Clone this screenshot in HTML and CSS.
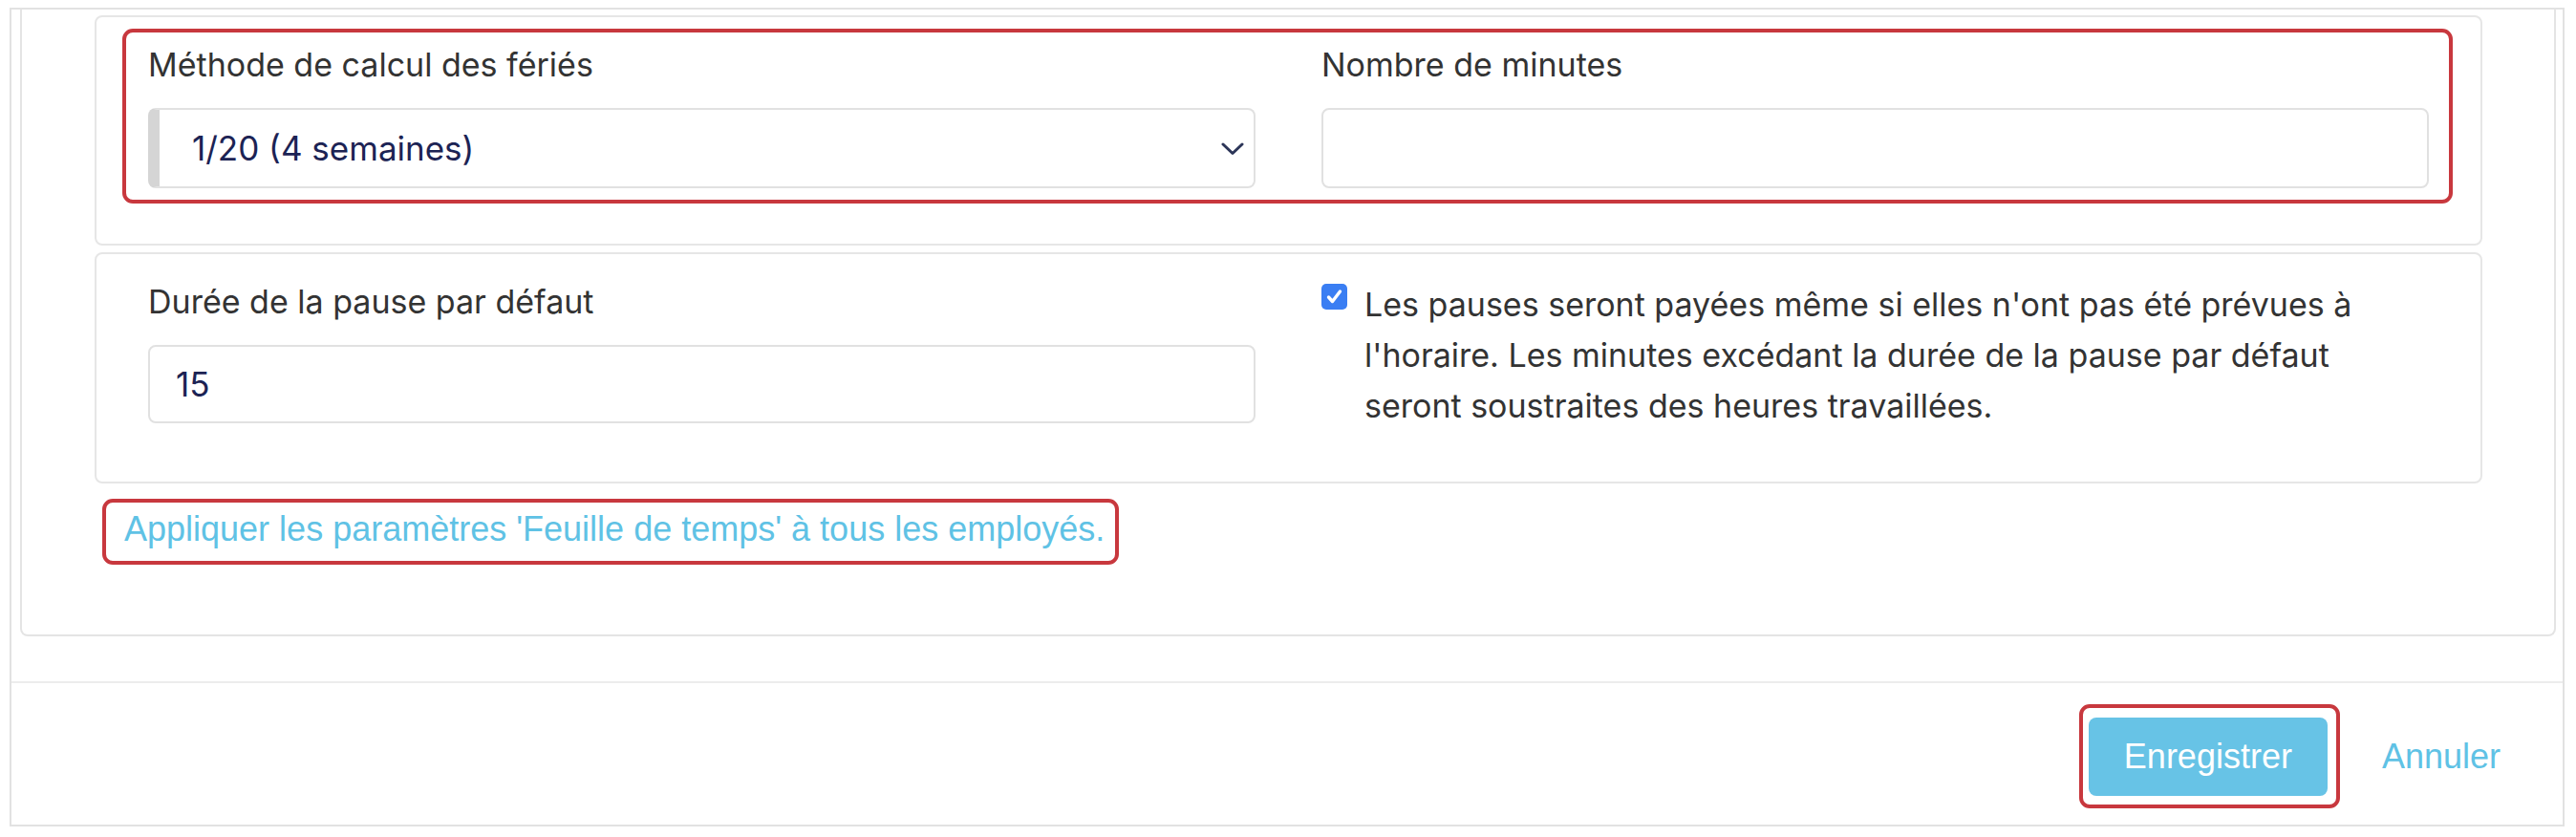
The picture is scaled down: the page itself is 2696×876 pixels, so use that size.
FILE: index.html
```html
<!DOCTYPE html>
<html lang="fr">
<head>
<meta charset="utf-8">
<title>Feuille de temps</title>
<link rel="stylesheet" href="styles.css">
</head>
<body>
<div class="frame">
  <div class="frame-body">
    <div class="panel">
      <section class="card card--first">
        <div class="row highlight highlight--row">
          <div class="field">
            <label class="label">Méthode de calcul des fériés</label>
            <div class="select">
              <span class="value">1/20 (4 semaines)</span>
              <svg class="chevron" width="24" height="14" viewBox="0 0 24 14"><path d="M2 2 L12 11.5 L22 2" fill="none" stroke="#2c3558" stroke-width="3" stroke-linecap="round" stroke-linejoin="round"/></svg>
            </div>
          </div>
          <div class="field">
            <label class="label">Nombre de minutes</label>
            <div class="input"></div>
          </div>
        </div>
      </section>
      <section class="card card--second">
        <div class="row">
          <div class="field">
            <label class="label">Durée de la pause par défaut</label>
            <div class="input input--short"><span class="value">15</span></div>
          </div>
          <div class="check-field">
            <span class="checkbox">
              <svg width="27" height="27" viewBox="0 0 27 27"><path d="M7.5 14 L11.5 18.5 L19.5 8" fill="none" stroke="#fff" stroke-width="3.4" stroke-linecap="round" stroke-linejoin="round"/></svg>
            </span>
            <p class="check-text">Les pauses seront payées même si elles n'ont pas été prévues à l'horaire. Les minutes excédant la durée de la pause par défaut seront soustraites des heures travaillées.</p>
          </div>
        </div>
      </section>
      <div class="apply">
        <a class="apply-link highlight highlight--link" href="#">Appliquer les paramètres 'Feuille de temps' à tous les employés.</a>
      </div>
    </div>
  </div>
  <footer class="footer">
    <button class="btn-save highlight highlight--btn" type="button">Enregistrer</button>
    <a class="btn-cancel" href="#">Annuler</a>
  </footer>
</div>
</body>
</html>
```
FILE: styles.css
```css
* { box-sizing: border-box; }

html, body {
  margin: 0;
  padding: 0;
  background: #fff;
}

body {
  font-family: Inter, "Noto Sans", sans-serif;
  color: #333;
}

.frame {
  margin: 8px 12px 0 10px;
  border: 2px solid #e2e2e2;
}

.frame-body {
  padding: 0 7px 47px 9px;
}

.panel {
  border: 2px solid #e4e4e4;
  border-top: 0;
  border-radius: 0 0 8px 8px;
  padding: 6px 75px 90px 76px;
}

.card {
  border: 2px solid #e6e6e6;
  border-radius: 8px;
  padding: 26px 54px 58px 54px;
}

.card--second {
  margin-top: 7px;
  padding-bottom: 53px;
}

.row {
  display: grid;
  grid-template-columns: 1fr 1fr;
  column-gap: 69px;
  align-items: start;
}

.highlight { position: relative; }
.highlight::after {
  content: "";
  position: absolute;
  border: 4px solid #c8383e;
  border-radius: 11px;
  pointer-events: none;
}
.highlight--row::after { top: -14px; bottom: -16px; left: -27px; right: -25px; }
.highlight--link::after { top: -11px; bottom: -17px; left: -23px; right: -15px; }
.highlight--btn::after { top: -14px; bottom: -13px; left: -10px; right: -13px; }

.field { display: flex; flex-direction: column; }

.label {
  font-size: 34px;
  line-height: 48px;
  color: #333;
  margin-bottom: 21px;
}

.select, .input {
  height: 84px;
  border: 2px solid #e1e1e1;
  border-radius: 8px;
  background: #fff;
  display: flex;
  align-items: center;
}

.select {
  border-left: 12px solid #d5d5d5;
  padding: 0 10px 0 34px;
  justify-content: space-between;
}

.input--short { height: 82px; padding-left: 27px; }

.value {
  font-size: 35px;
  color: #1c2354;
  line-height: 1;
}

.chevron { display: block; margin-top: 2px; }

.check-field {
  display: flex;
  align-items: flex-start;
  gap: 18px;
}

.checkbox {
  flex: 0 0 27px;
  width: 27px;
  height: 27px;
  margin-top: 5px;
  border-radius: 5px;
  background: #3a7ef3;
  display: flex;
}

.check-text {
  margin: 0;
  font-size: 34px;
  line-height: 53px;
  color: #333;
}

.apply {
  margin-top: 27px;
  padding-left: 31px;
}

.apply-link {
  display: inline-block;
  font-family: "Liberation Sans", Arial, sans-serif;
  font-size: 36px;
  line-height: 41px;
  color: #5fc2e5;
  text-decoration: none;
}

.footer {
  border-top: 2px solid #ececec;
  display: flex;
  justify-content: flex-end;
  align-items: center;
  padding: 36px 30px 30px;
}

.btn-save {
  height: 82px;
  padding: 0 37px;
  border: 0;
  border-radius: 8px;
  background: #67c3e6;
  color: #fff;
  font-family: "Liberation Sans", Arial, sans-serif;
  font-size: 36px;
}

.btn-cancel {
  margin-left: 22px;
  padding: 0 35px;
  font-family: "Liberation Sans", Arial, sans-serif;
  font-size: 36px;
  color: #5fc2e5;
  text-decoration: none;
}
```
